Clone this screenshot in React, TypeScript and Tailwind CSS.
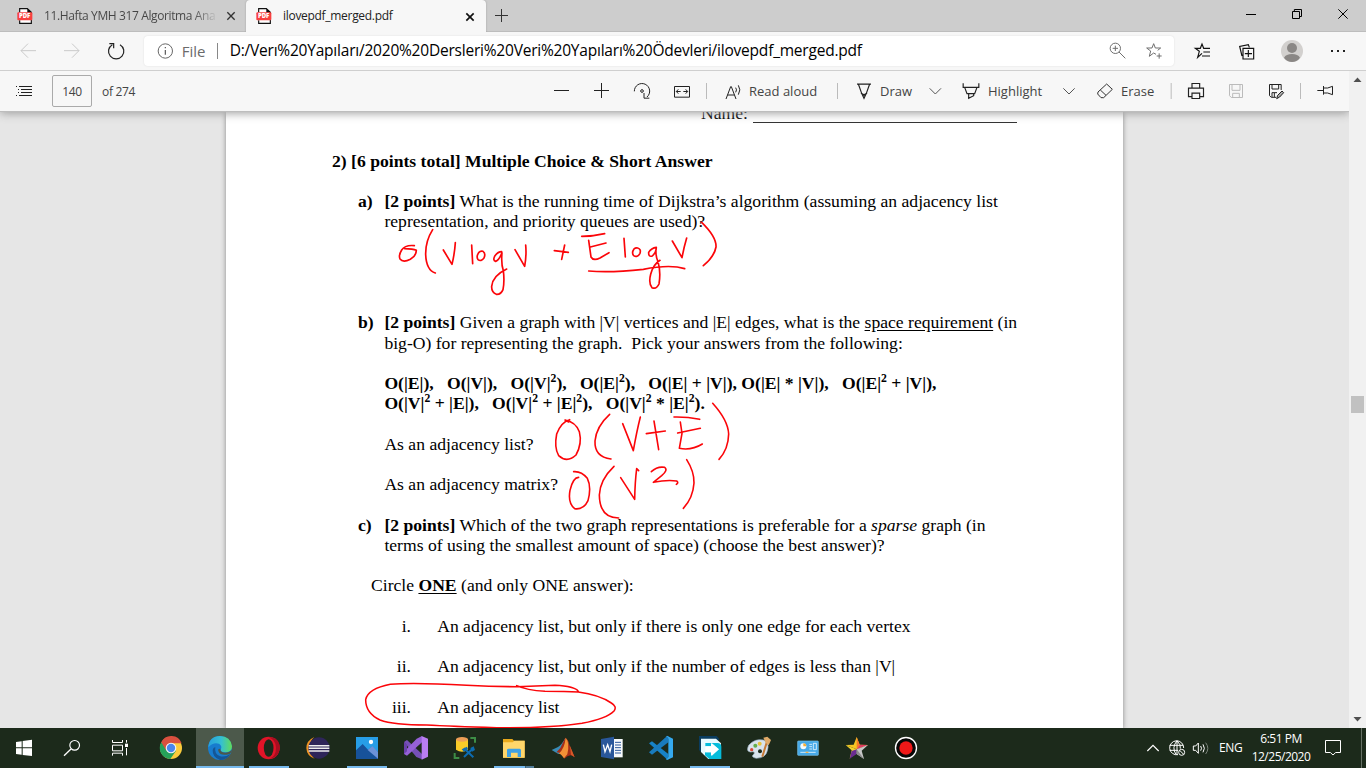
import React from "react";

type IconProps = { box: string; w: number; h: number; className?: string; children: React.ReactNode };

/* Icons are drawn at three times their displayed size. */
function Icon({ box, w, h, className = "", children }: IconProps) {
  return (
    <svg viewBox={box} width={w} height={h} className={`shrink-0 ${className}`} fill="none">
      {children}
    </svg>
  );
}

function PdfIcon({ className = "" }: { className?: string }) {
  return (
    <div className={`relative h-[18px] w-[16px] shrink-0 ${className}`}>
      <Icon box="0 0 48 54" w={16} h={18}>
        <path d="M8 16V5H31L43 16V49H8V40" fill="#fff" stroke="#111" strokeWidth="3.5" />
        <path d="M31 4V17H44Z" fill="#111" />
        <rect x="1" y="16" width="45" height="24" rx="3" fill="#f8403f" />
      </Icon>
      <span className="absolute left-[2px] top-[5px] text-[6px] font-extrabold leading-[8px] tracking-[-0.1px] text-white">PDF</span>
    </div>
  );
}

function TabBar() {
  return (
    <div className="flex h-[32px] bg-[#cdcdcd]">
      <div className="flex w-[246px] items-center border-b border-[#bdbdbd]">
        <PdfIcon className="ml-[17px]" />
        <span className="ml-[11px] w-[174px] whitespace-nowrap bg-gradient-to-r from-[#444] from-85% to-[#cdcdcd] bg-clip-text text-[12px] tracking-[-0.38px] text-transparent">
          11.Hafta YMH 317 Algoritma Ana
        </span>
        <Icon box="0 0 30 30" w={10} h={10} className="ml-[8px] mt-[1px]">
          <path d="M4 4L26 26M26 4L4 26" stroke="#333" strokeWidth="4" />
        </Icon>
      </div>
      <div className="flex w-[240px] items-center rounded-t-[4px] bg-[#f7f7f7] shadow-[0_0_2px_#999] [clip-path:inset(-3px_-3px_0_-3px)]">
        <PdfIcon className="ml-[10px]" />
        <span className="ml-[11px] w-[173px] whitespace-nowrap text-[12px] tracking-[-0.3px] text-[#222]">ilovepdf_merged.pdf</span>
        <Icon box="0 0 30 30" w={10} h={10} className="ml-[9px] mt-[1px]">
          <path d="M4 4L26 26M26 4L4 26" stroke="#111" strokeWidth="5" />
        </Icon>
      </div>
      <div className="flex flex-1 items-center border-b border-[#bdbdbd]">
        <Icon box="1482 24 48 48" w={16} h={16} className="ml-[8px]">
          <path d="M1485 46.5H1524M1504.500 27V66" stroke="#333" strokeWidth="3" />
        </Icon>
        <Icon box="900 0 378 93" w={126} h={31} className="ml-auto">
          <path d="M918 43.500H948M1057.500 34.500H1078.500V55.500H1057.500ZM1063 34V28.500H1084.500V49.500H1079M1195 28L1223 56M1223 28L1195 56" stroke="#000" strokeWidth="3" />
        </Icon>
      </div>
    </div>
  );
}

function AddressBar() {
  return (
    <div className="flex h-[39px] items-center border-b border-[#cfcfcf] bg-[#f7f7f7]">
      <Icon box="0 96 432 114" w={144} h={38}>
        <g stroke="#cacaca" strokeWidth="3">
          <path d="M108 152H63M84 131L63 152L84 173" />
          <path d="M192 152H237M216 131L237 152L216 173" />
        </g>
        <path d="M360 134A23 23 0 1 1 337 134M328 131H341V145" stroke="#222" strokeWidth="3.6" />
      </Icon>
      <div className="flex h-[30px] w-[1030px] items-center rounded-[4px] bg-white shadow-[0_0_2px_#ddd]">
        <Icon box="472 128 50 50" w={16.667} h={16.667} className="ml-[13px]">
          <circle cx="497" cy="152" r="21.500" stroke="#666" strokeWidth="3" />
          <path d="M497 149V163M497 140V144" stroke="#555" strokeWidth="3.500" />
        </Icon>
        <span className="ml-[8px] w-[35px] whitespace-nowrap text-[15px] text-[#6b6b6b]">File</span>
        <span className="h-[16px] w-px bg-[#888]" />
        <span className="ml-[12px] w-[860px] whitespace-nowrap text-[15.500px] tracking-[-0.215px] text-black">
          D:/Verı%20Yapıları/2020%20Dersleri%20Veri%20Yapıları%20Ödevleri/ilovepdf_merged.pdf
        </span>
        <Icon box="505 109 170 90" w={56.667} h={30} className="ml-[18px]">
          <g stroke="#6e6e6e" strokeWidth="3">
            <circle cx="527" cy="146" r="15.500" />
            <path d="M538 157L557 176M519 146H535M527 138V154" />
            <path d="M649 164L642 160L629 170L633 154L621 145H637L642 132L647 145H663L654 152M651 169H666M658.500 161V177" />
          </g>
        </Icon>
      </div>
      <Icon box="702 96 576 114" w={192} h={38}>
        <g stroke="#111" strokeWidth="3.500">
          <path d="M786 160L773 172L778 154L766 145H781L786 132L791 145H810M790 156H810M786 168H810" />
          <path d="M909 145H941V177H909ZM925 150V171M914.500 161H936M906 168L899 139L925 134L928 142" />
        </g>
        <circle cx="1056" cy="153" r="33" fill="#d2d0ce" />
        <circle cx="1056" cy="144" r="15" fill="#8a8785" />
        <path d="M1032 173Q1038 162 1056 162Q1074 162 1080 173Q1070 186 1056 186Q1042 186 1032 173Z" fill="#8a8785" />
        <path d="M1173 153h6M1191 153h6M1209 153h6" stroke="#222" strokeWidth="6" />
      </Icon>
    </div>
  );
}

function PdfToolbar() {
  const label = "whitespace-nowrap pt-[1px] text-[13px] text-[#444]";
  return (
    <div className="relative z-10 flex h-[41px] items-center border-b border-[#bdbdbd] bg-[#f7f7f7] shadow-[0_1px_9px_#999]">
      <Icon box="0 213 144 120" w={48} h={40}>
        <path d="M57 259.500H96M63 268.500H96M63 277.500H96M57 286.500H96" stroke="#222" strokeWidth="3" />
        <path d="M48 259.500h3M54 268.500h3M54 277.500h3M48 286.500h3" stroke="#222" strokeWidth="3" />
      </Icon>
      <div className="ml-[4px] flex h-[32px] w-[40px] items-center justify-center rounded-[2px] border border-[#aaa] pt-[1px] text-[12px] tracking-[-0.3px] text-[#444]">140</div>
      <span className="ml-[10px] w-[40px] whitespace-nowrap pt-[1px] text-[12px] tracking-[-0.3px] text-[#444]">of 274</span>
      <Icon box="36 213 612 120" w={204} h={40} className="ml-[400px]">
        <g stroke="#222" strokeWidth="3">
          <path d="M72 271.500H117M192 271.500H237M214.500 249V294" />
          <path d="M313 274A23 23 0 1 1 351 291M342 279V294.500H358" />
          <circle cx="336" cy="273" r="4" />
          <path d="M433.500 259.500H478.500V291.500H433.500ZM439 274.500H452M460 274.500H473M445 268L439 274.500L445 281M467 268L473 274.500L467 281" />
          <path d="M588 297L602 260H604L618 297M593 285H613M617 263Q622 269 617 277M625 256Q634 269 625 284" />
        </g>
        <path d="M529.500 249V297" stroke="#bbb" strokeWidth="3" />
      </Icon>
      <span className={`ml-[3px] w-[72px] ${label}`}>Read aloud</span>
      <Icon box="903 213 141 120" w={47} h={40} className="ml-[10px]">
        <path d="M922.500 249V297" stroke="#bbb" strokeWidth="3" />
        <path d="M981 252.500H1023M985 252L995 280L1002 295L1009 280L1019 252M993 279Q1002 289 1011 279M997 285.500H1007" stroke="#222" strokeWidth="3.500" />
      </Icon>
      <span className={`ml-[2px] w-[36px] ${label}`}>Draw</span>
      <Icon box="1182 213 60 120" w={20} h={40} className="ml-[8px]">
        <path d="M1199 265L1216 282L1233 265" stroke="#555" strokeWidth="3" />
      </Icon>
      <Icon box="60 213 72 120" w={24} h={40} className="ml-[16px]">
        <path d="M69.500 250V262H116.500V250M74 262L81 281H104L111 262M86 281V295L101 287V281" stroke="#222" strokeWidth="3.500" />
      </Icon>
      <span className={`ml-[4px] w-[60px] ${label}`}>Highlight</span>
      <Icon box="351 213 180 120" w={60} h={40} className="ml-[9px]">
        <path d="M370 265L387 282L404 265" stroke="#555" strokeWidth="3" />
        <path d="M474 276L500 252L517 268L491 293H483L473 282ZM481 270L498 286" stroke="#333" strokeWidth="3" />
      </Icon>
      <span className={`ml-[4px] w-[36px] ${label}`}>Erase</span>
      <Icon box="660 213 567 120" w={189} h={40} className="ml-[3px]">
        <path d="M693.500 249V297M1081.500 249V297" stroke="#bbb" strokeWidth="3" />
        <path d="M756 264V250.500H779V264M756 290H745.500V264.500H790.500V290H779M756 279.500H779V295.500H756Z" stroke="#222" strokeWidth="3.500" />
        <path d="M868.500 253.500H907.500V292.500H874L868.500 287ZM876 254V271H900V254M878 292V280H898V292" stroke="#bbb" strokeWidth="3" />
        <path d="M1008 292H994L988.500 287V253.500H1023.500V270M996 254V267H1016V254M996 291V278H1011M1003 279V291" stroke="#222" strokeWidth="3" />
        <path d="M1010 296L1013 286L1026 273L1031 278L1019 291Z" fill="#aaa" stroke="#222" strokeWidth="3" />
        <path d="M1132 271.500H1150M1150.500 258V284M1151 264H1163L1177.500 259V284L1163 279H1151" stroke="#222" strokeWidth="3" />
      </Icon>
    </div>
  );
}

function Blank() {
  return <div className="h-[20.24px]" />;
}

function Item({ mark, pad, children }: { mark: string; pad: string; children: React.ReactNode }) {
  return (
    <div className={`flex ${pad}`}>
      <b className="w-[26.4px] shrink-0">{mark}</b>
      <div>{children}</div>
    </div>
  );
}

function Choice({ num, children }: { num: string; children: React.ReactNode }) {
  return (
    <div className="flex">
      <span className="w-[79px] text-right">{num}</span>
      <span className="ml-[26.200px]">{children}</span>
    </div>
  );
}

const Sq = () => <span className="relative top-[-7px] text-[11.700px] leading-none">2</span>;

function Page() {
  return (
    <div className="ml-[226px] h-[617px] w-[897px] overflow-hidden whitespace-pre bg-white font-['Liberation_Serif',serif] text-[17.620px] leading-[20.240px] text-black shadow-[0_0_5px_#888]">
      <div className="flex h-[38.500px] pl-[475px]">
        <span className="mt-[-9px] w-[52px]">Name:</span>
        <span className="h-[11px] w-[264px] border-b border-[#333]" />
      </div>
      <div className="pl-[106px]">
        <b>2) [6 points total] Multiple Choice &amp; Short Answer</b>
        <Blank />
        <Item mark="a)" pad="pl-[26px]">
          <b>[2 points]</b> What is the running time of Dijkstra’s algorithm (assuming an adjacency list<br />
          representation, and priority queues are used)?
        </Item>
        <Blank /><Blank /><Blank /><Blank />
        <Item mark="b)" pad="pl-[26px]">
          <b>[2 points]</b> Given a graph with |V| vertices and |E| edges, what is the <u className="underline-offset-2">space requirement</u> (in<br />
          big-O) for representing the graph.{"  "}Pick your answers from the following:
        </Item>
        <Blank />
        <div className="pl-[52.400px] font-bold">
          <div className="h-[20.240px]">O(|E|),{"   "}O(|V|),{"   "}O(|V|<Sq />),{"   "}O(|E|<Sq />),{"   "}O(|E| + |V|), O(|E| * |V|),{"   "}O(|E|<Sq /> + |V|),</div>
          <div className="h-[20.240px]">O(|V|<Sq /> + |E|),{"   "}O(|V|<Sq /> + |E|<Sq />),{"   "}O(|V|<Sq /> * |E|<Sq />).</div>
        </div>
        <Blank />
        <div className="pl-[52.400px]">As an adjacency list?</div>
        <Blank />
        <div className="pl-[52.400px]">As an adjacency matrix?</div>
        <Blank />
        <Item mark="c)" pad="pl-[26px]">
          <b>[2 points]</b> Which of the two graph representations is preferable for a <i>sparse</i> graph (in<br />
          terms of using the smallest amount of space) (choose the best answer)?
        </Item>
        <Blank />
        <div className="pl-[39px]">Circle <b className="underline underline-offset-2">ONE</b> (and only ONE answer):</div>
        <Blank />
        <Choice num="i.">An adjacency list, but only if there is only one edge for each vertex</Choice>
        <Blank />
        <Choice num="ii.">An adjacency list, but only if the number of edges is less than |V|</Choice>
        <Blank />
        <Choice num="iii.">An adjacency list</Choice>
      </div>
    </div>
  );
}

function Ink() {
  return (
    <svg className="absolute inset-0" width="1349" height="616" viewBox="0 112 1349 616" fill="none" stroke="#fb0509" strokeLinecap="round" strokeLinejoin="round">
      <g transform="translate(380 190) scale(.333333)" strokeWidth="5">
        <path d="M103 167Q76 164 65 180Q55 196 60 207Q69 219 91 208Q109 198 109 181Q99 176 74 176" />
        <path d="M158 119Q136 154 137 194Q139 240 166 249" />
        <path d="M190 180L216 223Q224 190 226 158" />
        <path d="M275 165L278 221M296 188Q288 199 294 209Q303 216 312 204Q318 190 309 184Q302 181 296 188" />
        <path d="M365 185Q354 185 345 197Q337 211 347 214Q357 211 366 188Q363 222 370 242Q374 273 369 299Q363 314 349 313Q334 307 335 289Q338 257 380 237" />
        <path d="M405 179L434 229Q440 195 437 165M523 182L565 187M554 165L545 208" />
        <path d="M605 139Q640 139 674 131M626 151L633 201Q640 214 660 204L687 188M631 171L678 159M626 243Q690 249 790 238Q870 222 914 236" />
        <path d="M732 145L736 201M762 177Q754 188 761 197Q772 204 780 190Q784 177 773 174Q766 173 762 177M829 172Q814 174 806 187Q805 202 817 198Q829 187 829 172Q825 195 834 215Q843 245 837 282Q829 299 816 293Q805 280 812 253Q819 224 840 211M877 153L906 203Q912 171 920 144" />
        <path d="M965 97Q1010 141 1008 171Q1003 200 970 227" />
      </g>
      <g transform="translate(340 365) scale(.333333)" strokeWidth="4.800">
        <path d="M689 164Q663 171 650 207Q642 248 656 272Q681 295 708 270Q727 236 718 200Q707 171 675 165L686 171" />
        <path d="M809 148Q769 184 765 228Q763 276 813 282M848 176L880 257Q890 200 901 156M919 206L976 198M942 168L956 254" />
        <path d="M1002 156Q1040 155 1079 163M1021 171L1026 205L1018 250Q1055 257 1087 237M1013 204L1081 190M1118 115Q1164 166 1166 207Q1165 253 1137 283" />
        <path d="M716 337Q699 337 690 376Q683 414 704 431Q731 435 744 407Q755 366 742 340Q724 318 701 320M822 304Q780 344 778 390Q779 459 836 459" />
        <path d="M842 338L884 403Q885 351 890 311L896 317M934 320Q952 303 974 307Q985 315 965 332L940 352Q980 344 1010 348Q1017 353 1009 358M1040 284Q1063 320 1062 354Q1059 399 1030 430" />
      </g>
      <g transform="translate(340 600) scale(.333333)" strokeWidth="4.600">
        <path d="M530 257Q560 271 615 274Q679 274 715 276Q777 284 814 309Q832 320 822 333Q800 356 726 370Q630 385 470 383Q330 379 260 375Q160 375 120 360Q77 339 77 299Q84 266 151 253Q220 247 380 256Q460 260 530 260Q585 258 645 256Q705 259 715 274" />
      </g>
    </svg>
  );
}

function Task({ x, active, line, gap = "mr-px", children }: { x: number; active?: boolean; line?: string; gap?: string; children: React.ReactNode }) {
  return (
    <div className={`flex h-[40px] w-[48px] shrink-0 ${gap} ${active ? "bg-[#4c594b]" : ""}`}>
      <Icon box={`${x} 6 144 120`} w={48} h={40}>
        {children}
        {line === "full" && <path d={`M${x} 123H${x + 144}`} stroke="#76b9ed" strokeWidth="6" />}
        {line === "part" && <path d={`M${x + 12} 123H${x + 132}`} stroke="#76b9ed" strokeWidth="6" />}
        {line === "stack" && <path d={`M${x + 106} 123H${x + 132}`} stroke="#527d99" strokeWidth="6" />}
        {line === "stack" && <path d={`M${x + 12} 123H${x + 105}`} stroke="#76b9ed" strokeWidth="6" />}
      </Icon>
    </div>
  );
}

function Taskbar() {
  return (
    <div className="flex h-[40px] bg-[#1c2a1b] text-white">
      <Task x={0} gap=""><path d="M48 48L65 46V64H48ZM68 45L96 41V64H68ZM48 67H65V86L48 84ZM68 67H96V90L68 87Z" fill="#fff" /></Task>
      <Task x={144} gap=""><circle cx="224" cy="58" r="14.500" stroke="#fff" strokeWidth="3.500" /><path d="M213 69L192 89" stroke="#fff" strokeWidth="4" /></Task>
      <Task x={288} gap="mr-[3px]"><path d="M337.500 42V49.500H367.500V42M337.500 57.500H367.500V74.500H337.500ZM337.500 89V81.500H367.500V89M379.500 42V50M379.500 66V88" stroke="#fff" strokeWidth="3" /><rect x="375" y="53" width="9" height="10" fill="#fff" /></Task>
      <Task x={441}>
        <circle cx="513" cy="66" r="33" fill="#fbcb3c" />
        <path d="M513 66L484 49A33 33 0 0 1 542 50H513Z" fill="#d9503f" />
        <path d="M513 66L484 49A33 33 0 0 0 511 99L528 74Z" fill="#26a15a" />
        <path d="M484 49A33 33 0 0 1 545 52H513L499 74Z" fill="#d9503f" />
        <circle cx="513" cy="66" r="16" fill="#f3f3f3" /><circle cx="513" cy="66" r="12.500" fill="#4a86ee" />
      </Task>
      <Task x={588} active line="full">
        <defs><linearGradient id="edge" x1="624" y1="50" x2="696" y2="50" gradientUnits="userSpaceOnUse"><stop stopColor="#279fdc" /><stop offset=".55" stopColor="#35bfd2" /><stop offset="1" stopColor="#62dc59" /></linearGradient></defs>
        <circle cx="660" cy="66" r="36" fill="#187cce" />
        <path d="M625 64Q627 31 660 30Q692 31 696 61Q696 79 675 79Q659 78 662 70Q668 61 657 53Q640 47 625 64Z" fill="url(#edge)" />
        <path d="M646 64Q642 85 661 91Q676 94 691 84Q680 102 660 102Q637 94 638 72Q640 63 646 64Z" fill="#155696" />
        <path d="M661 68Q660 80 678 80Q690 78 696 71Q696 80 689 84Q661 92 655 75Q653 67 661 68Z" fill="#4c594b" />
      </Task>
      <Task x={735} line="part"><ellipse cx="806" cy="66" rx="33" ry="34" fill="#e11428" /><path d="M816 34Q842 40 839 70Q836 95 808 99Q828 91 828 66Q828 42 806 34Z" fill="#a90e20" /><ellipse cx="806" cy="66" rx="14.500" ry="26" fill="#1c2a1b" /></Task>
      <Task x={882}><path d="M943 33Q919 44 919 66Q920 90 944 98Q930 86 930 65Q930 43 943 33Z" fill="#f29422" /><circle cx="957" cy="66" r="32" fill="#2e2559" /><path d="M926 59H988M926 67H988M926 75H988" stroke="#eee" strokeWidth="4.500" /></Task>
      <Task x={9} line="part"><path d="M48 33H114V99H48Z" fill="#279ee7" /><path d="M48 73L68 54L84 71L96 62L114 78V99H48Z" fill="#17529a" /><path d="M83 72L97 60L114 78V98Z" fill="#6c92d8" /><circle cx="93" cy="48" r="6.500" fill="#fff" /></Task>
      <Task x={156}><path d="M192 48L201 42L246 84V100L229 93Z" fill="#7650b7" /><path d="M192 84L201 89L246 49V30L230 38L192 77Z" fill="#9561d7" /><path d="M192 48L201 56V76L192 84Z" fill="#6a41aa" /><path d="M245 30L264 38V92L245 101Z" fill="#b97df1" /></Task>
      <Task x={303}><path d="M348 40V71Q366 83 384 71V40Z" fill="#f8cb28" /><ellipse cx="366" cy="40" rx="18" ry="7" fill="#ed9e57" /><path d="M391 36H405V50M344 81V96H358" stroke="#3d8d46" strokeWidth="6" /><path d="M372 93L398 68M372 67L400 94" stroke="#0d6bb1" strokeWidth="6" /><path d="M365 70L381 62L384 70L372 77ZM391 66L401 61L405 72L396 77Z" fill="#0d6bb1" /></Task>
      <Task x={450} line="stack"><path d="M489 39H517L522 44H554V95H489Z" fill="#e9a91c" /><path d="M489 49H518L523 44H554V95H489Z" fill="#ffd66b" /><path d="M501 93V72Q501 68 506 68H539Q543 68 543 73V93H533V80H513V93Z" fill="#3fa1e5" /></Task>
      <Task x={597}><path d="M635 72L654 63Q664 58 676 36L671 77L655 84Z" fill="#398cb7" /><path d="M649 79L661 66L676 35Q682 38 689 59L704 94Q690 79 673 98Q665 78 649 79Z" fill="#a42e18" /><path d="M677 35Q690 50 682 85L672 97Q663 82 656 83Q674 68 677 35Z" fill="#f29137" /><path d="M678 35Q692 61 704 94L693 86Q691 51 678 35Z" fill="#d75828" /></Task>
      <Task x={744}><path d="M820 39H848V94H820Z" fill="#f6f9fc" /><path d="M825 49H843M825 57H843M825 65H843M825 73H843M825 81H843" stroke="#2a579a" strokeWidth="3" /><path d="M783 39L822 32V100L783 93Z" fill="#29579b" /><path d="M790 56L795 77L803 56L810 77L815 56" stroke="#fff" strokeWidth="4" /></Task>
      <Task x={21}><path d="M57 52L66 46L115 84V101L110 99Z" fill="#1782c7" /><path d="M57 79L66 86L115 49V30L107 34Z" fill="#197bbd" /><path d="M111 29L129 38V94L111 102L107 98Q115 99 115 92V39Q115 31 107 33Z" fill="#35a9ee" /></Task>
      <Task x={168} line="part"><path d="M207 30H260L268 39L222 86L207 72Z" fill="#0a3c5f" /><path d="M213 38H258L273 52V99H235L213 78Z" fill="#e9faff" /><path d="M226 51H262Q274 51 274 62V99H238L225 88V79H245V90L267 70L245 51V61H226Z" fill="#06bcdb" /><path d="M226 61H243V51L266 70L243 89V79H226Z" fill="#fff" /></Task>
      <Task x={315}><path d="M356 58Q373 37 400 42Q420 50 412 74Q407 96 379 97Q360 93 372 84Q376 75 362 78Q347 77 356 58Z" fill="#d9e3ec" stroke="#9cb1c3" strokeWidth="2" /><circle cx="365" cy="71" r="5" fill="#d84a38" /><circle cx="376" cy="59" r="6" fill="#65ae4b" /><circle cx="389" cy="53" r="6" fill="#e8c33b" /><circle cx="390" cy="76" r="6" fill="#1c2a1b" /><path d="M411 47L397 92" stroke="#c77b37" strokeWidth="6" /><path d="M400 35L412 32L423 42L416 58L407 50Z" fill="#e0aa69" /></Task>
      <Task x={462}><rect x="503" y="45" width="62" height="43" rx="2" fill="#46a9e8" stroke="#78c5ed" strokeWidth="2" /><circle cx="520" cy="61" r="9" fill="#f4fbff" /><path d="M520 61V52A9 9 0 0 1 529 61Z" fill="#f7ad33" /><path d="M538 55H546M538 62H546M538 69H546M550 52H559V71H550ZM511 79H557" stroke="#e9f7ff" strokeWidth="2.500" /><path d="M527 79H535" stroke="#f5b34a" strokeWidth="4" /></Task>
      <Task x={609}><path d="M680 33L689 56L714 57L680 70L647 57L671 56Z" fill="#f5c422" /><path d="M680 33L689 56L680 70Z" fill="#f5792b" /><path d="M689 56L714 57L680 70Z" fill="#e13b61" /><path d="M647 57L680 70L659 98L665 73Z" fill="#f2d32c" /><path d="M680 70L680 84L659 98L665 75Z" fill="#6a2b91" /><path d="M680 70L714 57L695 74L702 99L680 84Z" fill="#c7c7c7" /><path d="M680 70L702 99L680 84Z" fill="#8c8c8c" /></Task>
      <Task x={756}><circle cx="828" cy="66" r="31.500" fill="#070707" stroke="#fff" strokeWidth="4" /><circle cx="828" cy="66" r="20" fill="#ef1818" /></Task>
      <Icon box="66 84 210 120" w={70} h={40} className="ml-auto">
        <path d="M82 153L99 136L116 153" stroke="#fff" strokeWidth="3.500" />
        <g stroke="#fff" strokeWidth="3"><path d="M174 164A21 21 0 1 1 191 144M149 136H189M149 151H174M171 123V164M171 122Q154 143 168 163M171 122Q184 135 181 146" /><circle cx="185" cy="157" r="9" /><path d="M179 151L191 163" /></g>
        <path d="M220 138H227L235 129V160L227 151H220ZM242 138Q247 145 242 152M249 133Q257 145 249 157" stroke="#fff" strokeWidth="3" />
        <path d="M257 128Q270 145 257 162" stroke="#7b847b" strokeWidth="3" />
      </Icon>
      <span className="ml-[7px] w-[25px] whitespace-nowrap text-[12px] leading-[40px] tracking-[-0.4px]">ENG</span>
      <div className="ml-[5px] flex w-[64px] flex-col items-center whitespace-nowrap pt-[2px] text-[12px] leading-[18px] tracking-[-0.5px]">
        <span>6:51 PM</span>
        <span>12/25/2020</span>
      </div>
      <Icon box="606 84 132 120" w={44} h={40} className="ml-[9px]">
        <path d="M616.500 121.500H661.500V157.500H647L639 165L631 157.500H616.500Z" stroke="#fff" strokeWidth="3" />
        <path d="M724.500 84V204" stroke="#657064" strokeWidth="3" />
      </Icon>
    </div>
  );
}

export default function App() {
  return (
    <div className="flex h-[768px] w-[1366px] flex-col overflow-hidden bg-[#e6e6e6] font-['Open_Sans','Noto_Sans',sans-serif]">
      <TabBar />
      <AddressBar />
      <div className="flex h-[657px]">
        <div className="w-[1349px] overflow-hidden">
          <PdfToolbar />
          <div className="relative h-[616px] overflow-hidden">
            <Page />
            <Ink />
          </div>
        </div>
        <div className="flex w-[17px] flex-col items-center bg-[#f1f1f1]">
          <svg width="17" height="17" viewBox="0 0 17 17"><path d="M4.500 11L8.500 6.500L12.500 11Z" fill="#505050" /></svg>
          <div className="mt-[308px] h-[17px] w-[13px] bg-[#c1c1c1]" />
          <svg width="17" height="17" viewBox="0 0 17 17" className="mt-auto"><path d="M4.500 6L8.500 10.500L12.500 6Z" fill="#505050" /></svg>
        </div>
      </div>
      <Taskbar />
    </div>
  );
}
